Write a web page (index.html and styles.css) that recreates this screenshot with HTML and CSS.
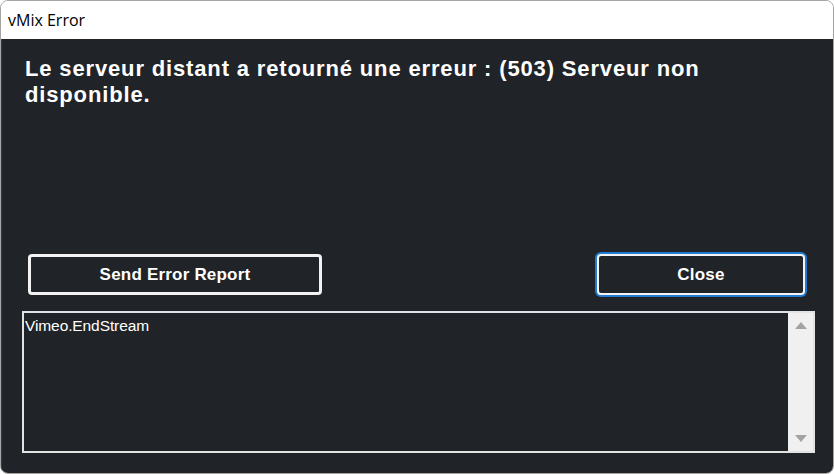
FILE: index.html
```html
<!DOCTYPE html>
<html lang="fr">
<head>
    <meta charset="UTF-8">
    <title>vMix Error</title>
    <link rel="stylesheet" href="styles.css">
</head>
<body>
    <div class="window">
        <div class="titlebar">vMix Error</div>
        <div class="dialog">
            <h1 class="message">Le serveur distant a retourné une erreur : (503) Serveur non disponible.</h1>

            <div class="actions">
                <button class="btn btn-report">Send Error Report</button>
                <button class="btn btn-close">Close</button>
            </div>

            <!-- Détails de l'erreur -->
            <div class="details">
                <div class="details-text">Vimeo.EndStream</div>
                <div class="scrollbar">
                    <span class="arrow arrow-up"></span>
                    <span class="arrow arrow-down"></span>
                </div>
            </div>
        </div>
    </div>
</body>
</html>
```

FILE: styles.css
```css
html, body {
    margin: 0;
    padding: 0;
    background: #ffffff;
}
.window {
    width: 834px;
    height: 474px;
    box-sizing: border-box;
    border: 1px solid #a4a4a4;
    border-radius: 8px;
    overflow: hidden;
    display: flex;
    flex-direction: column;
}
.titlebar {
    height: 38px;
    flex: none;
    background: #ffffff;
    display: flex;
    align-items: center;
    padding-left: 7px;
    font-family: "Open Sans", "Noto Sans", sans-serif;
    font-size: 16px;
    color: #000000;
}
.dialog {
    flex: 1;
    background: #202428;
    border-left: 1px solid #3a3d40;
    padding-top: 17px;
    display: flex;
    flex-direction: column;
}
.message {
    margin: 0 0 0 23px;
    max-width: 760px;
    font-family: "Liberation Sans", Arial, sans-serif;
    font-size: 22px;
    font-weight: bold;
    letter-spacing: 0.85px;
    line-height: 26px;
    color: #ffffff;
}
.actions {
    display: flex;
    justify-content: space-between;
    margin-top: 146px;
    padding: 0 27px 0 26px;
}
.btn {
    height: 41px;
    background: #202428;
    color: #ffffff;
    font-family: "Liberation Sans", Arial, sans-serif;
    font-size: 17px;
    font-weight: bold;
    letter-spacing: 0.2px;
    border-radius: 4px;
    cursor: pointer;
}
.btn-report {
    width: 294px;
    border: 3px solid #f2f2f2;
}
.btn-close {
    width: 208px;
    margin-right: 1px;
    border: 2px solid #f5f5f5;
    box-shadow: 0 0 0 2px #1f7ad0;
}
.details {
    margin: 16px 18px 0 20px;
    height: 142px;
    box-sizing: border-box;
    border: 2px solid #e3e3e3;
    display: flex;
}
.details-text {
    flex: 1;
    padding: 4px 1px;
    font-family: "Liberation Sans", Arial, sans-serif;
    font-size: 15.5px;
    letter-spacing: -0.1px;
    color: #ffffff;
}
.scrollbar {
    width: 25px;
    background: #f0f0f0;
    position: relative;
}
.arrow {
    position: absolute;
    left: 7px;
    width: 0;
    height: 0;
    border-left: 6px solid transparent;
    border-right: 6px solid transparent;
}
.arrow-up {
    top: 9px;
    border-bottom: 7px solid #a3a3a3;
}
.arrow-down {
    bottom: 9px;
    border-top: 7px solid #a3a3a3;
}
```
